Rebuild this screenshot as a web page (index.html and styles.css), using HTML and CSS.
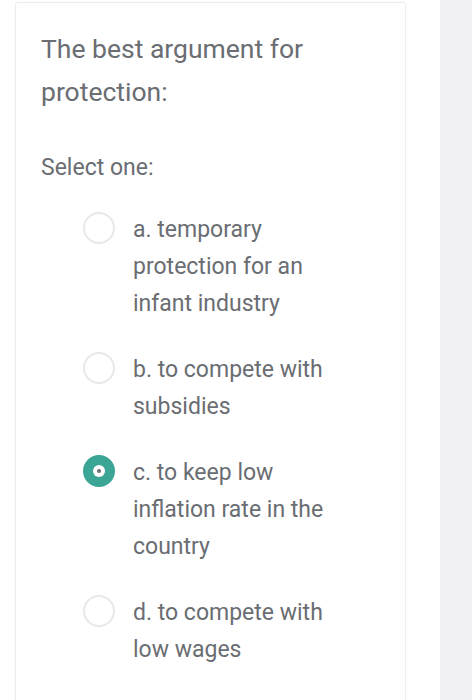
FILE: index.html
```html
<!DOCTYPE html>
<html>
<head>
<meta charset="utf-8">
<link rel="stylesheet" href="styles.css">
</head>
<body>
<div class="page">
  <main class="main">
    <section class="card">
      <h1 class="question">The best argument for protection:</h1>
      <p class="prompt">Select one:</p>
      <div class="options">
        <div class="option">
          <span class="radio"></span>
          <span class="label">a. temporary protection for an infant industry</span>
        </div>
        <div class="option">
          <span class="radio"></span>
          <span class="label">b. to compete with subsidies</span>
        </div>
        <div class="option">
          <span class="radio checked"><span class="dot"></span></span>
          <span class="label">c. to keep low inflation rate in the country</span>
        </div>
        <div class="option">
          <span class="radio"></span>
          <span class="label">d. to compete with low wages</span>
        </div>
      </div>
    </section>
  </main>
  <aside class="side"></aside>
</div>
</body>
</html>
```

FILE: styles.css
```css
html, body {
  margin: 0;
  padding: 0;
  background: #ffffff;
  font-family: Roboto, "Liberation Sans", sans-serif;
  color: #6a6d72;
}
.page {
  display: flex;
  height: 700px;
  overflow: hidden;
}
.main {
  width: 440px;
  flex: none;
  padding: 2px 0 0 15px;
  box-sizing: border-box;
}
.card {
  width: 391px;
  height: 760px;
  box-sizing: border-box;
  border: 1px solid #ededed;
  border-radius: 3px;
  box-shadow: 0 0 2px rgba(0,0,0,0.04);
  padding: 24px 25px 0 25px;
}
.question {
  margin: 0;
  font-size: 26.5px;
  font-weight: 400;
  line-height: 43px;
  width: 310px;
}
.prompt {
  margin: 36px 0 0 0;
  font-size: 23px;
  line-height: 37px;
}
.options {
  margin: 25px 0 0 42px;
  display: flex;
  flex-direction: column;
  gap: 29px;
}
.option {
  display: flex;
  align-items: flex-start;
  gap: 18px;
}
.radio {
  flex: none;
  width: 32px;
  height: 32px;
  margin-top: 1px;
  box-sizing: border-box;
  border: 2px solid #e8e8e8;
  border-radius: 50%;
  display: flex;
  align-items: center;
  justify-content: center;
}
.radio.checked {
  background: #3ba596;
  border-color: #3ba596;
}
.dot {
  width: 12px;
  height: 12px;
  border-radius: 50%;
  background: #ffffff;
  display: flex;
  align-items: center;
  justify-content: center;
}
.dot::after {
  content: "";
  width: 4px;
  height: 4px;
  border-radius: 50%;
  background: #6b6e72;
}
.label {
  font-size: 23px;
  line-height: 37px;
  width: 205px;
}
.side {
  flex: 1;
  background: #f1f1f3;
}
```
